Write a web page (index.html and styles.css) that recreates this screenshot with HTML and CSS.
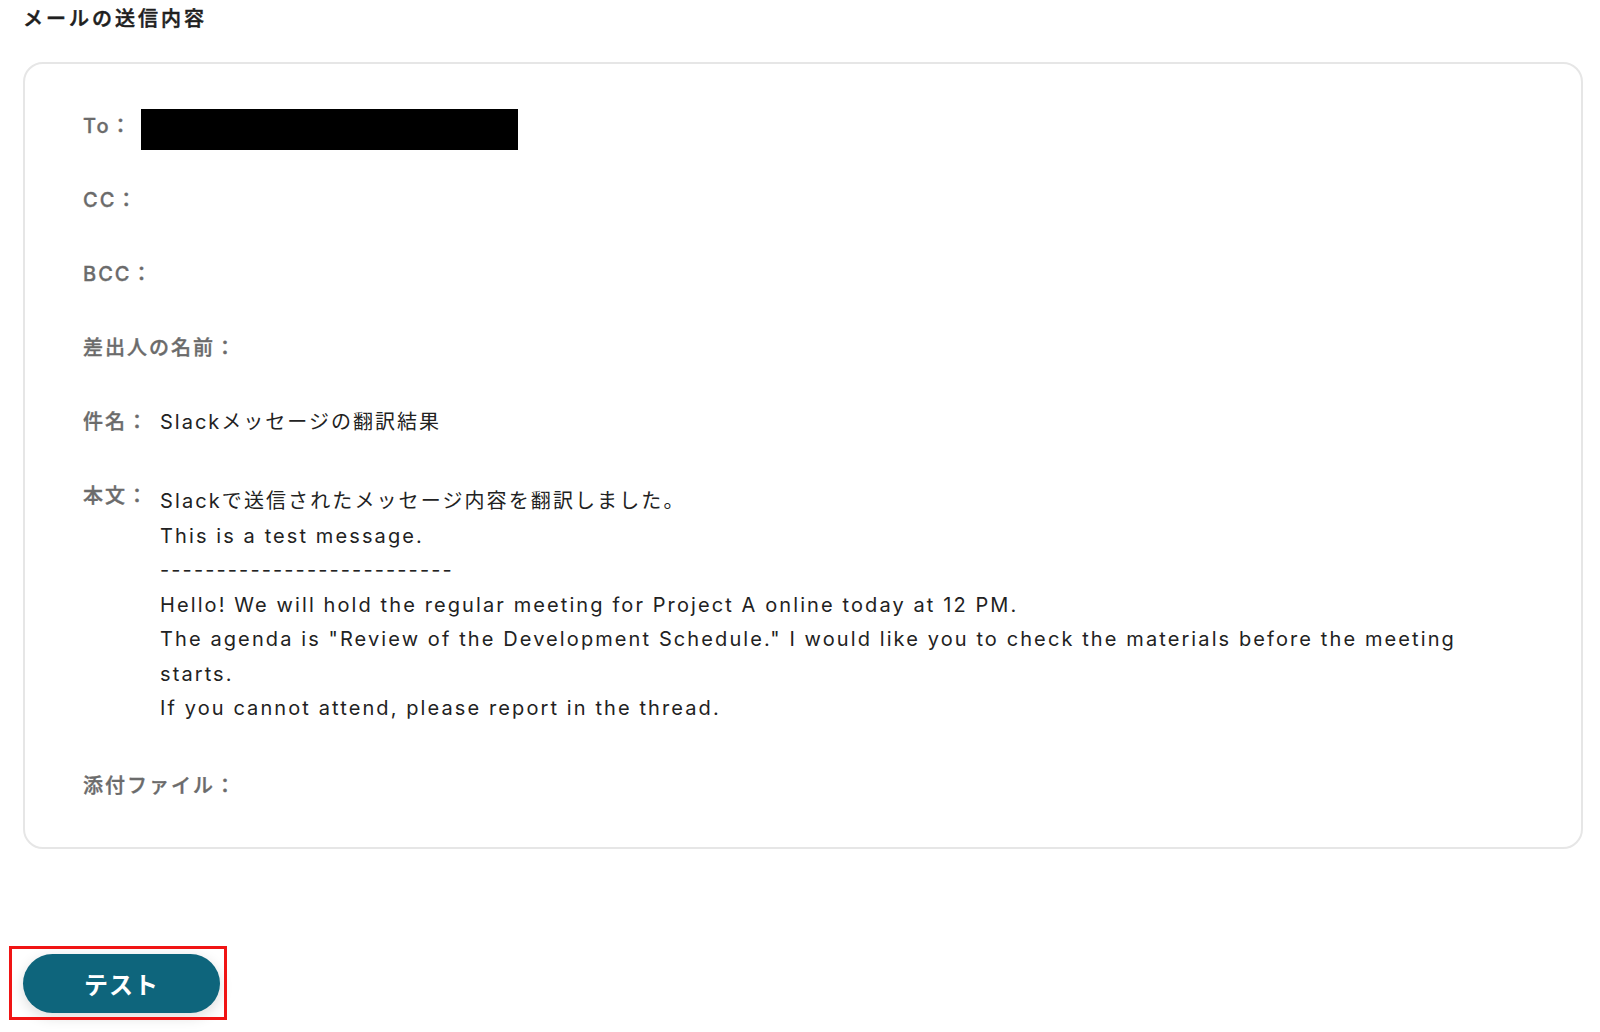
FILE: index.html
```html
<!DOCTYPE html>
<html lang="ja">
<head>
  <meta charset="utf-8">
  <title>メールの送信内容</title>
  <link rel="stylesheet" href="styles.css">
</head>
<body>
  <div class="page">
    <h2 class="section-title">メールの送信内容</h2>

    <div class="mail-card">
      <div class="row row-to">
        <span class="label">To：</span>
        <div class="masked"></div>
      </div>
      <div class="row">
        <span class="label">CC：</span>
      </div>
      <div class="row">
        <span class="label">BCC：</span>
      </div>
      <div class="row">
        <span class="label">差出人の名前：</span>
      </div>
      <div class="row">
        <span class="label">件名：</span>
        <span class="value">Slackメッセージの翻訳結果</span>
      </div>
      <div class="row row-body">
        <span class="label">本文：</span>
        <div class="value body-text">
          <p>Slackで送信されたメッセージ内容を翻訳しました。</p>
          <p>This is a test message.</p>
          <p>--------------------------</p>
          <p>Hello! We will hold the regular meeting for Project A online today at 12 PM.</p>
          <p>The agenda is "Review of the Development Schedule." I would like you to check the materials before the meeting starts.</p>
          <p>If you cannot attend, please report in the thread.</p>
        </div>
      </div>
      <div class="row">
        <span class="label">添付ファイル：</span>
      </div>
    </div>

    <div class="actions">
      <button type="button" class="test-btn">テスト</button>
      <div class="highlight"></div>
    </div>
  </div>
</body>
</html>
```

FILE: styles.css
```css
* {
  box-sizing: border-box;
}

body {
  margin: 0;
  background: #fff;
  font-family: Inter, "Noto Sans CJK JP", sans-serif;
  color: #222;
}

.page {
  padding: 4px 17px 30px 23px;
}

.section-title {
  margin: 0;
  font-size: 20px;
  line-height: 30px;
  font-weight: 500;
  letter-spacing: 0.15em;
  color: #1f1f1f;
  -webkit-text-stroke: 0.5px #1f1f1f;
}

.mail-card {
  margin-top: 28px;
  border: 2px solid #e6e6e6;
  border-radius: 20px;
  padding: 45px 58px 44px 58px;
  display: flex;
  flex-direction: column;
  gap: 40px;
}

.row {
  display: flex;
  align-items: flex-start;
  gap: 11px;
  font-size: 20px;
  line-height: 34px;
  letter-spacing: 0.1em;
}

.label {
  color: #6b6b6b;
  font-weight: 500;
  white-space: nowrap;
  -webkit-text-stroke: 0.35px #6b6b6b;
}

.value {
  color: #222;
}

.masked {
  width: 377px;
  height: 41px;
  margin-left: -3px;
  margin-bottom: -7px;
  background: #000;
}

.row-body {
  margin-bottom: 3px;
}

.body-text {
  padding-top: 5px;
  padding-right: 30px;
  letter-spacing: 0.105em;
}

.body-text p {
  margin: 0;
  line-height: 34.5px;
}

.actions {
  position: relative;
  margin-top: 105px;
  width: 197px;
}

.test-btn {
  display: block;
  width: 197px;
  height: 59px;
  border: none;
  border-radius: 30px;
  background: #0e657c;
  color: #fff;
  font-family: Inter, "Noto Sans CJK JP", sans-serif;
  font-size: 24px;
  font-weight: 700;
  letter-spacing: 0.04em;
  box-shadow: 0 4px 14px rgba(0, 0, 0, 0.14);
  cursor: pointer;
}

/* annotation frame */
.highlight {
  position: absolute;
  left: -14px;
  top: -8px;
  width: 218px;
  height: 74px;
  border: 3.5px solid #f01414;
  pointer-events: none;
}
```
